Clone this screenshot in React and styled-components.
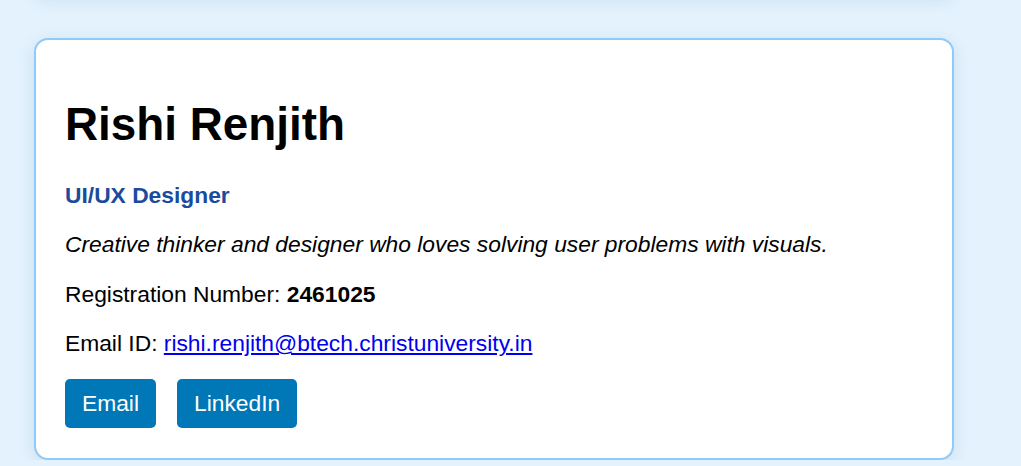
import React from "react";
import styled, { createGlobalStyle } from "styled-components";

const Global = createGlobalStyle`
  html, body { margin: 0; padding: 0; }
  body {
    background: #e3f2fd;
    font-family: "Liberation Sans", Arial, sans-serif;
    font-size: 22.8px;
    color: #000;
    overflow: hidden;
  }
`;

const Page = styled.main`
  display: flex;
  flex-direction: column;
  gap: 42px;
  padding: 0 67px 0 34px;
  margin-top: -204px;
`;

const Card = styled.section`
  box-sizing: border-box;
  width: 920px;
  background: #fff;
  border: 2px solid #90caf9;
  border-radius: 14px;
  box-shadow: 0 4px 16px rgba(30, 80, 140, 0.12);
  padding: 25px 29px 30px;
  display: flex;
  flex-direction: column;
  min-height: ${(p) => (p.$height ? `${p.$height}px` : "auto")};
`;

const Name = styled.h1`
  font-size: 45.8px;
  line-height: 52px;
  font-weight: 700;
  margin: 34px 0 31px;
`;

const Role = styled.h2`
  font-size: 22.8px;
  line-height: 26px;
  font-weight: 700;
  color: #1a4b9c;
  margin: 0 0 23px;
`;

const Text = styled.p`
  font-size: 22.8px;
  line-height: 26px;
  margin: 0 0 ${(p) => p.$gap ?? 24}px;
  font-style: ${(p) => (p.$italic ? "italic" : "normal")};
`;

const Link = styled.a`
  color: #0000ee;
  text-decoration: underline;
`;

const Actions = styled.div`
  display: flex;
  gap: 21px;
`;

const Button = styled.a`
  display: inline-flex;
  align-items: center;
  justify-content: center;
  height: 49px;
  padding: 0 17px;
  box-sizing: border-box;
  background: #0077b6;
  color: #fff;
  border-radius: 5px;
  text-decoration: none;
  font-size: 22.8px;
`;

export default function App() {
  return (
    <>
      <Global />
      <Page>
        <Card $height={200} />
        <Card>
          <Name>Rishi Renjith</Name>
          <Role>UI/UX Designer</Role>
          <Text $italic>
            Creative thinker and designer who loves solving user problems with visuals.
          </Text>
          <Text $gap={23}>
            Registration Number: <strong>2461025</strong>
          </Text>
          <Text $gap={23}>
            Email ID:{" "}
            <Link href="mailto:rishi.renjith@btech.christuniversity.in">
              rishi.renjith@btech.christuniversity.in
            </Link>
          </Text>
          <Actions>
            <Button href="mailto:rishi.renjith@btech.christuniversity.in">Email</Button>
            <Button href="#">LinkedIn</Button>
          </Actions>
        </Card>
      </Page>
    </>
  );
}
